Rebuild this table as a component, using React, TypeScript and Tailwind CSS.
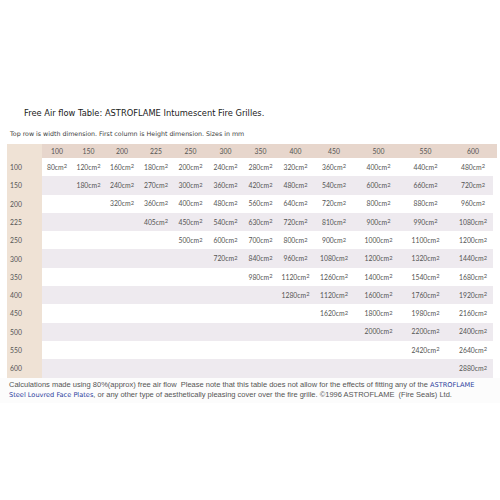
import React from 'react';

const widths = [100, 150, 200, 225, 250, 300, 350, 400, 450, 500, 550, 600];

// row height -> values starting at the matching width column
const rows: { h: number; start: number; values: number[] }[] = [
  { h: 100, start: 0, values: [80, 120, 160, 180, 200, 240, 280, 320, 360, 400, 440, 480] },
  { h: 150, start: 1, values: [180, 240, 270, 300, 360, 420, 480, 540, 600, 660, 720] },
  { h: 200, start: 2, values: [320, 360, 400, 480, 560, 640, 720, 800, 880, 960] },
  { h: 225, start: 3, values: [405, 450, 540, 630, 720, 810, 900, 990, 1080] },
  { h: 250, start: 4, values: [500, 600, 700, 800, 900, 1000, 1100, 1200] },
  { h: 300, start: 5, values: [720, 840, 960, 1080, 1200, 1320, 1440] },
  { h: 350, start: 6, values: [980, 1120, 1260, 1400, 1540, 1680] },
  { h: 400, start: 7, values: [1280, 1120, 1600, 1760, 1920] },
  { h: 450, start: 8, values: [1620, 1800, 1980, 2160] },
  { h: 500, start: 9, values: [2000, 2200, 2400] },
  { h: 550, start: 10, values: [2420, 2640] },
  { h: 600, start: 11, values: [2880] },
];

const gridCols =
  'grid grid-cols-[35px_30px_33px_34px_34px_35px_35px_35px_35px_42px_47px_47px_48px]';

const Area: React.FC<{ v: number }> = ({ v }) => (
  <span className="leading-none">
    {v}cm<sup className="text-[0.85em] relative -top-[0.25em] align-baseline">2</sup>
  </span>
);

export default function App() {
  return (
    <div className="w-[500px] h-[500px] bg-white text-[#222] pt-[108px]">
      <h1 className="pl-[24px] text-[8.3px] leading-[11px] font-['DejaVu_Sans',sans-serif] text-[#1a1a1a]">
        Free Air flow Table: ASTROFLAME Intumescent Fire Grilles.
      </h1>
      <p className="pl-[10px] mt-[10px] text-[6.3px] leading-[9px] font-['DejaVu_Sans',sans-serif] text-[#3a3a3a]">
        Top row is width dimension. First column is Height dimension. Sizes in mm
      </p>

      <div className="mx-[7px] mt-[6px] font-['Lato',sans-serif] text-[6.8px] text-[#555]">
        <div className={`${gridCols} h-[14px] items-center`}>
          <div className="h-full bg-[#efe2d5]" />
          {widths.map((w) => (
            <div key={w} className="h-full bg-[#e7d6cc] flex items-center justify-center">
              {w}
            </div>
          ))}
        </div>
        {rows.map((r, i) => (
          <div
            key={r.h}
            className={`${gridCols} h-[18.3px] ${i % 2 === 1 ? 'bg-[#eeeaef]' : 'bg-white'}`}
          >
            <div className="h-full bg-[#efe2d5] flex items-center pl-[3px]">{r.h}</div>
            {widths.map((w, c) => (
              <div key={w} className="h-full flex items-center justify-center">
                {c >= r.start ? <Area v={r.values[c - r.start]} /> : null}
              </div>
            ))}
          </div>
        ))}
      </div>

      <div className="px-[9px] pt-[2px] pb-[3px] text-[7.5px] leading-[10px] font-['Liberation_Sans',Arial,sans-serif] text-[#555] bg-[#fcfcfc] whitespace-nowrap">
        Calculations made using 80%(approx) free air flow&nbsp; Please note that this table does not
        allow for the effects of fitting any of the{' '}
        <span className="text-[#2b3d9c] font-['DejaVu_Sans',sans-serif] text-[6.6px]">ASTROFLAME</span>
        <br />
        <span className="text-[#2b3d9c] font-['DejaVu_Sans',sans-serif] text-[6.6px]">
          Steel Louvred Face Plates
        </span>
        , or any other type of aesthetically pleasing cover over the fire grille. ©1996 ASTROFLAME&nbsp;
        (Fire Seals) Ltd.
      </div>
    </div>
  );
}
